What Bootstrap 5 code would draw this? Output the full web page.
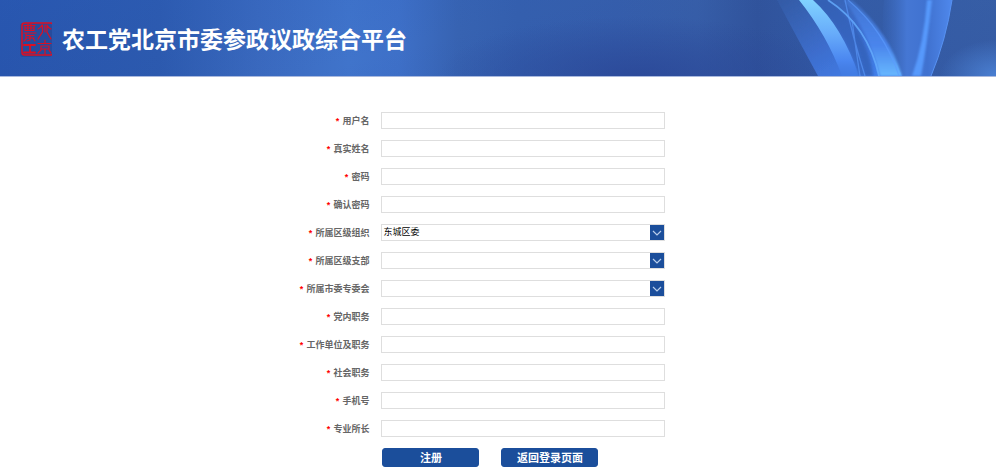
<!DOCTYPE html>
<html lang="zh-CN">
<head>
<meta charset="utf-8">
<meta name="viewport" content="width=device-width, initial-scale=1">
<title>农工党北京市委参政议政综合平台</title>
<link href="https://cdn.jsdelivr.net/npm/bootstrap@5.3.0/dist/css/bootstrap.min.css" rel="stylesheet">
<style>
body { font-family: "Liberation Sans", "Noto Sans CJK SC", sans-serif; font-size: 9px; line-height: 12px; }
.banner { height: 77px; border-bottom: 1px solid #a9b9de;
  background: radial-gradient(ellipse 200px 60px at 64% 100%, rgba(42,70,150,.8), rgba(42,70,150,0)),
    linear-gradient(165deg, rgba(44,96,190,.3), rgba(44,90,180,0) 45%, rgba(30,50,140,.15)),
    linear-gradient(90deg, #2753aa 0%, #2c59ad 16%, #3a69be 26%, #4074cb 35%, #3e70c8 40%, #3763b2 46%, #345fae 52%, #355eac 62%, #375fa9 70%, #31559d 76%, #355ea8 85%, #3962a8 100%); }
.banner-art { width: 256px; height: 76px; }
.seal { width: 35px; height: 37px; margin-left: 17px; }
.site-title { font-family: "Noto Sans CJK SC", sans-serif; font-size: 23px; line-height: 32px; font-weight: 700; margin-left: 10px; }
.form-line { display: grid; grid-template-columns: 15fr 284px 13fr; align-items: center; }
.form-line > label { color: #666; font-weight: 700; font-family: "Noto Sans CJK SC", sans-serif; }
.star { color: #f00; font-family: "Liberation Sans", sans-serif; margin-right: 1px; }
.field.form-control, .field.form-select { height: 17px; min-height: 17px; padding: 0 1px; font-size: 9px; line-height: 15px; color: #000; border: 1px solid #dedede; border-radius: 0; }
.field.form-select { background: #fff; }
.arrow { width: 14px; height: 15px; right: 1px; top: 1px; background: #1b4e9b; }
.action.btn { width: 97px; height: 19px; padding: 0; background: #1b4e9b; color: #fff; font: 700 11px/17px "Noto Sans CJK SC", sans-serif; border: 1px solid #1b4e9b; border-radius: 3px; }
.actions { gap: 22px; padding-left: 1px; }
.fields { gap: 11px; padding-top: 35px; }
</style>
<script src="https://cdn.jsdelivr.net/npm/bootstrap@5.3.0/dist/js/bootstrap.bundle.min.js"></script>
</head>
<body class="bg-white">
<header class="banner position-relative overflow-hidden d-flex align-items-center">
  <svg class="banner-art position-absolute end-0 top-0" viewBox="0 0 256 76" aria-hidden="true">
    <defs>
      <linearGradient id="petal" x1="0" y1="0" x2="1" y2="1"><stop offset="0" stop-color="#3b6cc0" stop-opacity=".2"/><stop offset=".5" stop-color="#3d6dcd"/><stop offset="1" stop-color="#4384f2"/></linearGradient>
      <linearGradient id="streak" x1="0" y1="0" x2="0" y2="1"><stop offset="0" stop-color="#80d2ff"/><stop offset=".45" stop-color="#67abfa"/><stop offset=".8" stop-color="#4a86f0"/><stop offset="1" stop-color="#4580e8" stop-opacity=".2"/></linearGradient>
      <linearGradient id="flare" x1="0" y1="0" x2="0" y2="1"><stop offset="0" stop-color="#477fdf" stop-opacity=".5"/><stop offset=".6" stop-color="#4a85ec"/><stop offset="1" stop-color="#68b8ff"/></linearGradient>
      <linearGradient id="leaf" x1="0" y1="0" x2="1" y2="0"><stop offset="0" stop-color="#3c6dc5" stop-opacity=".1"/><stop offset=".35" stop-color="#4577d4"/><stop offset=".65" stop-color="#4072d0"/><stop offset="1" stop-color="#4f88ec"/></linearGradient>
      <radialGradient id="corner" cx="1" cy="1" r="1"><stop offset="0" stop-color="#4a7fd2"/><stop offset="1" stop-color="#4a7fd2" stop-opacity="0"/></radialGradient>
      <filter id="soft" x="-20%" y="-20%" width="140%" height="140%"><feGaussianBlur stdDeviation="1.3"/></filter>
      <filter id="haze" x="-20%" y="-20%" width="140%" height="140%"><feGaussianBlur stdDeviation=".7"/></filter>
    </defs>
    <path d="M200 40H256V76H200Z" fill="url(#corner)"/>
    <path d="M144 0H212Q206 40 191 76H156Q138 50 144 0Z" fill="url(#leaf)"/>
    <path d="M37 0H108Q143 30 162 76H78Q60 43 37 0Z" fill="url(#petal)" filter="url(#haze)"/>
    <path d="M74 0H88Q126 30 132 76H119Q104 28 74 0Z" fill="#325eb5" opacity=".6" filter="url(#soft)"/>
    <path d="M59 0H73Q102 26 119 76H102Q87 35 59 0Z" fill="url(#streak)"/>
    <g filter="url(#soft)">
      <path d="M104 0H112Q149 32 162 76H140Q128 31 104 0Z" fill="url(#flare)"/>
      <path d="M187 0Q184 43 172 76H181Q187 45 192 0Z" fill="#5799fc"/>
      <path d="M118 30Q130 50 134 76H126L112 20Z" fill="#315fb8" opacity=".5"/>
    </g>
    <path d="M88 0Q128 26 139 76" fill="none" stroke="#66aeff" stroke-width="1.8" opacity=".8" filter="url(#haze)"/>
    <path d="M108 0Q144 30 159 76M105 0Q112 35 125 76M112 20Q116 50 120 76" fill="none" stroke="#5d9cff" stroke-width="1.3" opacity=".6" filter="url(#haze)"/>
    <path d="M212 0Q206 40 191 76" fill="none" stroke="#5792f3"/>
  </svg>
  <svg class="seal position-relative flex-shrink-0" viewBox="0 0 35 37" role="img" aria-label="农工北京">
    <rect x="3" y="3" width="32" height="34" rx="3" fill="#243b83" opacity=".4"/>
    <g fill="none" stroke="#dc0f22" stroke-width="1.2" stroke-linecap="round">
      <rect x="5" y="3" width="31" height="32" rx="2.5" stroke-width="1.5"/>
      <path d="M7 5.500H18M8 8H17M8 5.500V10.500H17V5.500M11 4V10M14 4V10M7 13H19M9 15.500H17M9 13V19L7 21M10 18H17M13 15.500V20M16 18L18 21M13 20L10 21"/>
      <path d="M7 25H18M13 25V32M7 32.500H18" stroke-width="1.8"/>
      <path d="M25.500 5V12L21 19M30 5V12L34 19M21 9Q24 8 25 5M34 9Q31 8 30 5M28 5V12"/>
      <path d="M28 20V23M21 23.500H34M24 26H32V29H24ZM28 29V34M24 30L21 33M32 30L34 33"/>
    </g>
  </svg>
  <h1 class="site-title position-relative text-white text-nowrap mb-0">农工党北京市委参政议政综合平台</h1>
</header>
<main>
  <form>
    <div class="fields d-flex flex-column">
      <div class="form-line"><label class="text-end pe-2 me-1" for="user"><span class="star">*</span> 用户名</label><input class="field form-control" id="user" type="text"></div>
      <div class="form-line"><label class="text-end pe-2 me-1" for="realname"><span class="star">*</span> 真实姓名</label><input class="field form-control" id="realname" type="text"></div>
      <div class="form-line"><label class="text-end pe-2 me-1" for="pwd"><span class="star">*</span> 密码</label><input class="field form-control" id="pwd" type="password"></div>
      <div class="form-line"><label class="text-end pe-2 me-1" for="pwd2"><span class="star">*</span> 确认密码</label><input class="field form-control" id="pwd2" type="password"></div>
      <div class="form-line"><label class="text-end pe-2 me-1" for="org"><span class="star">*</span> 所属区级组织</label><div class="position-relative"><select class="field form-select" id="org"><option>东城区委</option></select><svg class="arrow position-absolute pe-none" viewBox="0 0 14 15" aria-hidden="true"><path d="M3 6L7 10L11 6" fill="none" stroke="#b8cdea" stroke-width="1.2"/></svg></div></div>
      <div class="form-line"><label class="text-end pe-2 me-1" for="branch"><span class="star">*</span> 所属区级支部</label><div class="position-relative"><select class="field form-select" id="branch"><option></option></select><svg class="arrow position-absolute pe-none" viewBox="0 0 14 15" aria-hidden="true"><path d="M3 6L7 10L11 6" fill="none" stroke="#b8cdea" stroke-width="1.2"/></svg></div></div>
      <div class="form-line"><label class="text-end pe-2 me-1" for="committee"><span class="star">*</span> 所属市委专委会</label><div class="position-relative"><select class="field form-select" id="committee"><option></option></select><svg class="arrow position-absolute pe-none" viewBox="0 0 14 15" aria-hidden="true"><path d="M3 6L7 10L11 6" fill="none" stroke="#b8cdea" stroke-width="1.2"/></svg></div></div>
      <div class="form-line"><label class="text-end pe-2 me-1" for="partyjob"><span class="star">*</span> 党内职务</label><input class="field form-control" id="partyjob" type="text"></div>
      <div class="form-line"><label class="text-end pe-2 me-1" for="work"><span class="star">*</span> 工作单位及职务</label><input class="field form-control" id="work" type="text"></div>
      <div class="form-line"><label class="text-end pe-2 me-1" for="social"><span class="star">*</span> 社会职务</label><input class="field form-control" id="social" type="text"></div>
      <div class="form-line"><label class="text-end pe-2 me-1" for="phone"><span class="star">*</span> 手机号</label><input class="field form-control" id="phone" type="tel"></div>
      <div class="form-line"><label class="text-end pe-2 me-1" for="skill"><span class="star">*</span> 专业所长</label><input class="field form-control" id="skill" type="text"></div>
      <div class="form-line"><span></span><div class="actions d-flex"><button class="action btn" type="submit">注册</button><button class="action btn" type="button">返回登录页面</button></div></div>
    </div>
  </form>
</main>
</body>
</html>
